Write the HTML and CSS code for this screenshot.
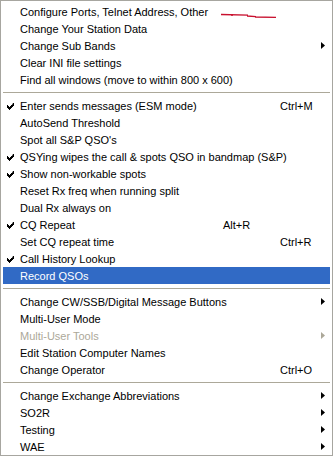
FILE: index.html
```html
<!DOCTYPE html>
<html lang="en">
<head>
  <meta charset="UTF-8">
  <title>Config menu</title>
  <link rel="stylesheet" href="styles.css">
</head>
<body>

  <div class="menu">
    <div class="item">Configure Ports, Telnet Address, Other</div>
    <div class="item">Change Your Station Data</div>
    <div class="item sub">Change Sub Bands</div>
    <div class="item">Clear INI file settings</div>
    <div class="item">Find all windows (move to within 800 x 600)</div>
    <div class="sep"></div>
    <div class="item checked">Enter sends messages (ESM mode)<span class="key">Ctrl+M</span></div>
    <div class="item">AutoSend Threshold</div>
    <div class="item">Spot all S&amp;P QSO's</div>
    <div class="item checked">QSYing wipes the call &amp; spots QSO in bandmap (S&amp;P)</div>
    <div class="item checked">Show non-workable spots</div>
    <div class="item">Reset Rx freq when running split</div>
    <div class="item">Dual Rx always on</div>
    <div class="item checked">CQ Repeat<span class="key mid">Alt+R</span></div>
    <div class="item">Set CQ repeat time<span class="key">Ctrl+R</span></div>
    <div class="item checked">Call History Lookup</div>
    <div class="item active">Record QSOs</div>
    <div class="sep"></div>
    <div class="item sub">Change CW/SSB/Digital Message Buttons</div>
    <div class="item">Multi-User Mode</div>
    <div class="item sub disabled">Multi-User Tools</div>
    <div class="item">Edit Station Computer Names</div>
    <div class="item">Change Operator<span class="key">Ctrl+O</span></div>
    <div class="sep"></div>
    <div class="item sub">Change Exchange Abbreviations</div>
    <div class="item sub">SO2R</div>
    <div class="item sub">Testing</div>
    <div class="item sub">WAE</div>

    <!-- red pen mark from the original screenshot -->
    <svg class="scribble" width="60" height="8" viewBox="0 0 60 8">
      <path d="M1 2.5 L28 3.2 M27 4 L36 4.6 M35 5 L56 5.3" stroke="#c8102e" stroke-width="1.3" fill="none"/>
      <circle cx="12" cy="3" r="1" fill="#c8102e"/>
    </svg>
  </div>

</body>
</html>
```

FILE: styles.css
```css
body {
  margin: 0;
  background: #fff;
  font-family: "Liberation Sans", Arial, sans-serif;
  font-size: 11px;
  color: #000;
}
.menu {
  position: relative;
  width: 327px;
  height: 451px;
  padding: 2px 2px 1px 2px;
  border: 1px solid #a7a6a0;
  background: #fff;
}
.item {
  display: flex;
  align-items: center;
  height: 17px;
  padding-left: 17px;
  padding-right: 17px;
  white-space: nowrap;
  background-repeat: no-repeat;
}
.key {
  margin-left: auto;
  width: 33px;
}
.key.mid {
  margin-left: 148px;
}
.item.checked {
  background-image: url("data:image/svg+xml,%3Csvg xmlns='http://www.w3.org/2000/svg' width='7' height='7' viewBox='0 0 7 7'%3E%3Cpath d='M6 0h1v3h-1v1h-1v1h-1v1h-1v1h-1v-1h-1v-1h-1v-3h1v1h1v1h1v-1h1v-1h1z' fill='%23000'/%3E%3C/svg%3E");
  background-position: 4px 6px;
}
.item.sub {
  background-image: url("data:image/svg+xml,%3Csvg xmlns='http://www.w3.org/2000/svg' width='4' height='7' viewBox='0 0 4 7'%3E%3Cpath d='M0 0L4 3.5L0 7z' fill='%23000'/%3E%3C/svg%3E");
  background-position: right 5px center;
}
.item.disabled {
  color: #aca899;
  background-image: url("data:image/svg+xml,%3Csvg xmlns='http://www.w3.org/2000/svg' width='4' height='7' viewBox='0 0 4 7'%3E%3Cpath d='M0 0L4 3.5L0 7z' fill='%23aca899'/%3E%3C/svg%3E");
}
.item.active {
  background: #316ac5;
  color: #fff;
}
.sep {
  height: 4px;
  margin-bottom: 4px;
  border-bottom: 1px solid #aca899;
}
.scribble {
  position: absolute;
  left: 219px;
  top: 11px;
}
```
